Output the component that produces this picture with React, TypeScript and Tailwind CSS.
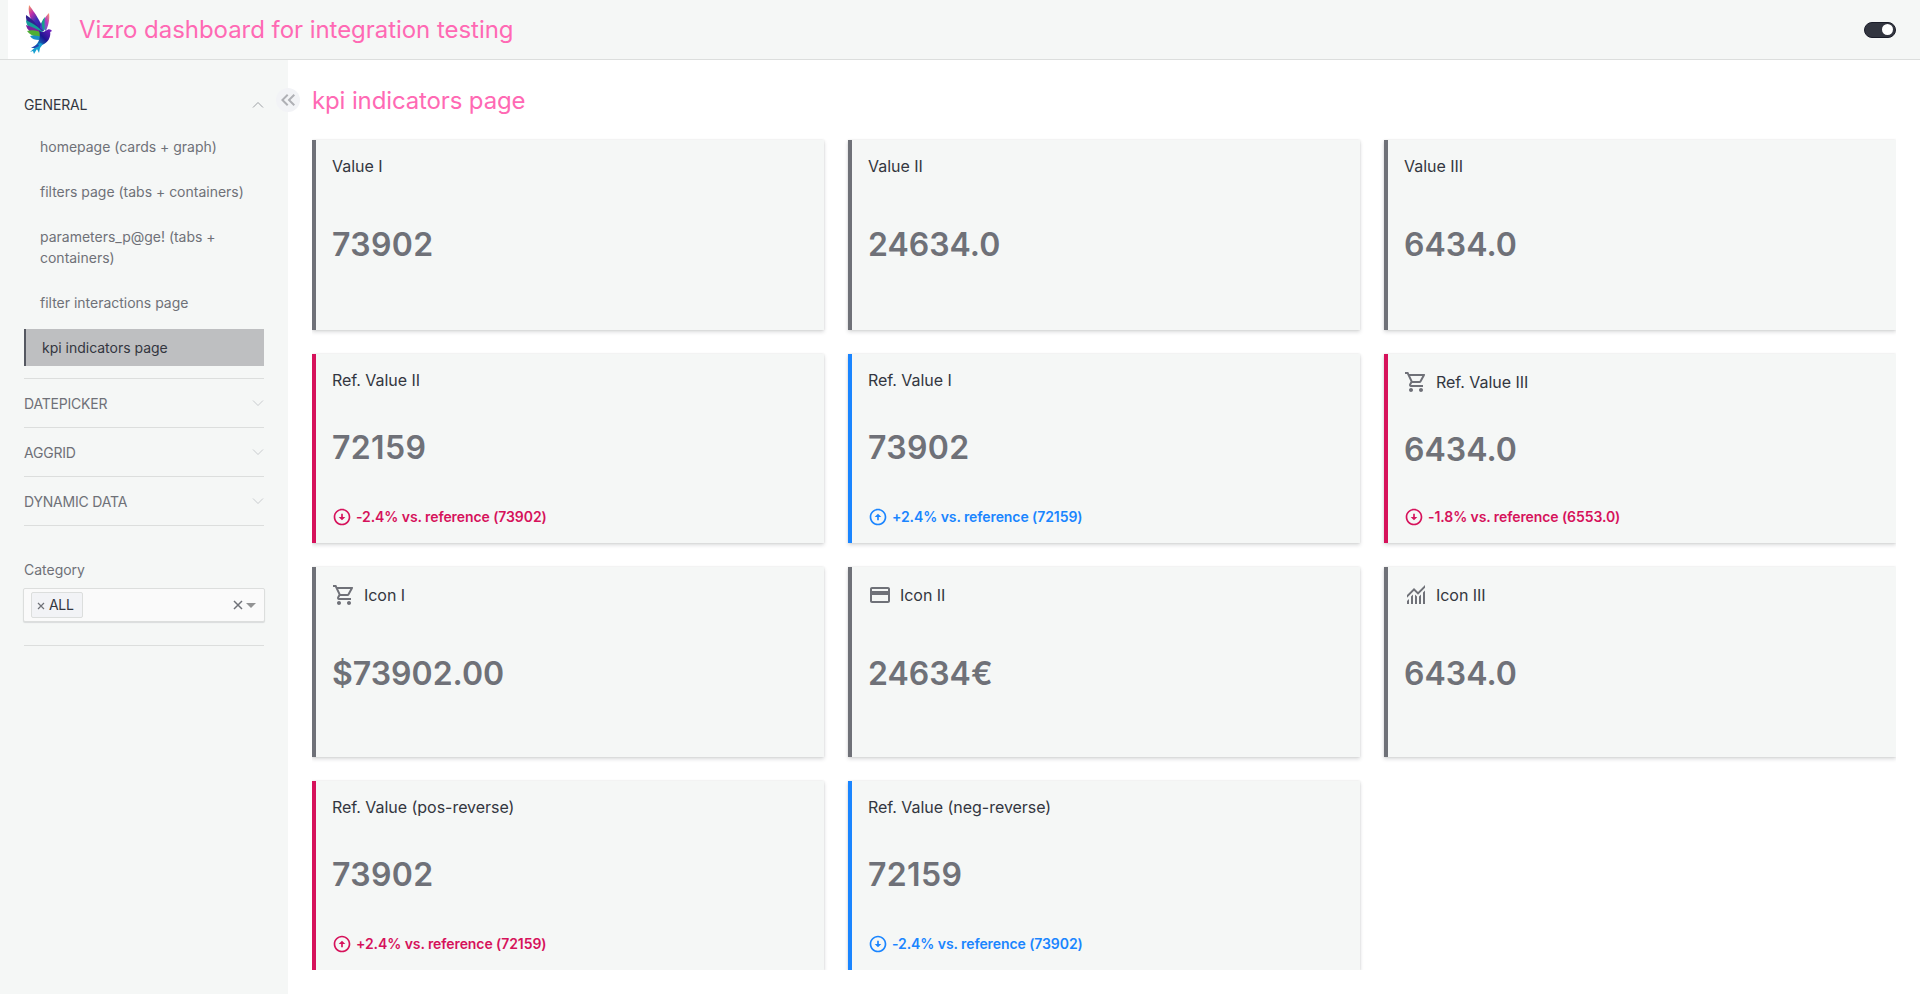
import React from "react";
import { MdOutlineShoppingCart, MdCreditCard, MdKeyboardDoubleArrowLeft, MdOutlineArrowCircleDown, MdOutlineArrowCircleUp } from "react-icons/md";

type Tone = "neutral" | "bad" | "good";
type Kpi = {
  title: string;
  value: string;
  tone: Tone;
  icon?: "cart" | "card" | "chart";
  delta?: string;
  dir?: "up" | "down";
};

const kpis: Kpi[] = [
  { title: "Value I", value: "73902", tone: "neutral" },
  { title: "Value II", value: "24634.0", tone: "neutral" },
  { title: "Value III", value: "6434.0", tone: "neutral" },
  { title: "Ref. Value II", value: "72159", tone: "bad", dir: "down", delta: "-2.4% vs. reference (73902)" },
  { title: "Ref. Value I", value: "73902", tone: "good", dir: "up", delta: "+2.4% vs. reference (72159)" },
  { title: "Ref. Value III", value: "6434.0", tone: "bad", dir: "down", icon: "cart", delta: "-1.8% vs. reference (6553.0)" },
  { title: "Icon I", value: "$73902.00", tone: "neutral", icon: "cart" },
  { title: "Icon II", value: "24634€", tone: "neutral", icon: "card" },
  { title: "Icon III", value: "6434.0", tone: "neutral", icon: "chart" },
  { title: "Ref. Value (pos-reverse)", value: "73902", tone: "bad", dir: "up", delta: "+2.4% vs. reference (72159)" },
  { title: "Ref. Value (neg-reverse)", value: "72159", tone: "good", dir: "down", delta: "-2.4% vs. reference (73902)" },
];

const borders: Record<Tone, string> = {
  neutral: "border-[#6f7178]",
  bad: "border-[#d6125b]",
  good: "border-[#1a85ff]",
};
const texts: Record<Tone, string> = {
  neutral: "text-[#6f7178]",
  bad: "text-[#d6125b]",
  good: "text-[#1a85ff]",
};

function FinanceIcon() {
  return (
    <svg viewBox="0 0 24 24" className="size-6" fill="currentColor">
      <path d="M3 21v-3l2-2v5zM7 21v-7.5l2-2V21zM11 21v-9.5l2 2V21zM15 21v-7.5l2-2V21zM19 21V9.500l2-2V21z" />
      <path d="M3 14.800V12l7-7 4 4 7-7v2.800l-7 7-4-4z" />
    </svg>
  );
}

function KpiIcon({ name }: { name: "cart" | "card" | "chart" }) {
  if (name === "cart") return <MdOutlineShoppingCart className="size-6" />;
  if (name === "card") return <MdCreditCard className="size-6" />;
  return <FinanceIcon />;
}

function KpiCard({ kpi }: { kpi: Kpi }) {
  const wholeNumber = /^\d+$/.test(kpi.value);
  return (
    <div className={`flex min-h-0 flex-col justify-between border-l-4 bg-[#f5f7f6] p-4 shadow-[0_2px_4px_0_rgba(20,23,33,0.16),0_0_2px_0_rgba(20,23,33,0.1)] ${borders[kpi.tone]}`}>
      <div className="flex items-center gap-2 text-[#6f7178]">
        {kpi.icon && <KpiIcon name={kpi.icon} />}
        <h4 className="text-base leading-5 tracking-[-0.032px] text-[#333640]">{kpi.title}</h4>
      </div>
      <p className={`text-[32px] leading-8 font-semibold text-[#6f7178] ${wholeNumber ? "tracking-[0.35px]" : "tracking-normal"}`}>{kpi.value}</p>
      <div className={`flex items-center gap-1 text-sm leading-5 font-semibold tracking-[-0.084px] ${texts[kpi.tone]}`}>
        {kpi.dir === "up" && <MdOutlineArrowCircleUp className="size-5" />}
        {kpi.dir === "down" && <MdOutlineArrowCircleDown className="size-5" />}
        {kpi.delta && <span>{kpi.delta}</span>}
      </div>
    </div>
  );
}

function BirdLogo() {
  return (
    <svg viewBox="0 0 62 59" className="h-[59px] w-[62px]">
      <defs>
        <linearGradient id="wingA" x1="0" y1="0" x2="0.7" y2="1">
          <stop offset="0" stopColor="#f9a25c" />
          <stop offset="0.3" stopColor="#c32fa8" />
          <stop offset="0.6" stopColor="#3b2fb5" />
          <stop offset="1" stopColor="#3a0fa0" />
        </linearGradient>
        <linearGradient id="wingB" x1="1" y1="0" x2="0" y2="1">
          <stop offset="0" stopColor="#ff9a6a" />
          <stop offset="0.45" stopColor="#b03ac4" />
          <stop offset="1" stopColor="#1795c4" />
        </linearGradient>
        <linearGradient id="body" x1="1" y1="0" x2="0" y2="1">
          <stop offset="0" stopColor="#7a1fc0" />
          <stop offset="0.5" stopColor="#1d1591" />
          <stop offset="1" stopColor="#0aa5cf" />
        </linearGradient>
      </defs>
      <path d="M21 5C27 13 33 22 36 31L32 32C26 26 19 16 21 5Z" fill="url(#wingA)" />
      <path d="M18 15C23 18 29 24 33 31L29 31C23 27 17 22 18 15Z" fill="#31218f" />
      <path d="M18 20C24 23 31 27 35 32L30 33C23 30 18 26 18 20Z" fill="#159c9a" />
      <path d="M18 25C24 27 30 29 34 33L29 35C23 33 19 30 18 25Z" fill="#7b239e" />
      <path d="M19 31C25 29 31 31 36 34L32 37C26 37 21 34 19 31Z" fill="#4faf35" />
      <path d="M22 36C27 35 32 36 36 38L31 40C27 40 24 39 22 36Z" fill="#1b8fc8" />
      <path d="M41 13C42 20 40 26 38 31L34 28C34 22 37 17 41 13Z" fill="url(#wingB)" />
      <path d="M37 17C36 23 37 27 36 31L33 28C33 23 34 20 37 17Z" fill="#14a08d" />
      <path d="M34 22C33 25 35 28 35 31L32 28C32 25 33 23 34 22Z" fill="#4740c8" />
      <path d="M31 30C35 34 37 31 40 29.500C42 29 43 30 44 31L42.200 32C43 37 40 43 34 45L27 46C31 42 33 38 31 30Z" fill="url(#body)" />
      <path d="M32 43L22 52L25 51L26 54L29 49L31 53L32 48L35 44Z" fill="#159fd0" />
      <path d="M30 44L23 48L27 48L31 46Z" fill="#2443ae" />
    </svg>
  );
}

function Chevron({ up = false }: { up?: boolean }) {
  return (
    <svg viewBox="0 0 12 8" className={`h-2 w-3 ${up ? "text-[#92949a]" : "text-[#c3c5c9]"}`} fill="none" stroke="currentColor" strokeWidth="0.9">
      <path d={up ? "M1 6.500 6 1.500 11 6.500" : "M1 1.500 6 6.500 11 1.500"} />
    </svg>
  );
}

const pages = [
  "homepage (cards + graph)",
  "filters page (tabs + containers)",
  "parameters_p@ge! (tabs + containers)",
  "filter interactions page",
];

function Sidebar() {
  return (
    <aside className="flex w-72 shrink-0 flex-col bg-[#f5f7f6] px-6 pt-6 text-sm tracking-[-0.01px] text-[#6f7178]">
      <div className="border-b border-[#dcdedd] pb-3">
        <div className="mb-0.5 flex h-[42px] items-center justify-between text-[#333640]">
          <span className="tracking-[-0.16px]">GENERAL</span>
          <Chevron up />
        </div>
        <nav className="flex flex-col gap-2">
          {pages.map((p) => (
            <a key={p} className="px-4 py-2 leading-[21px]">{p}</a>
          ))}
          <a className="border-l-2 border-[#555861] bg-[#bebfc1] px-4 py-2 leading-[21px] text-[#333640]">kpi indicators page</a>
        </nav>
      </div>
      {["DATEPICKER", "AGGRID", "DYNAMIC DATA"].map((s) => (
        <div key={s} className="flex h-[49px] items-center justify-between border-b border-[#dcdedd]">
          <span className="pt-0.5 tracking-[-0.2px]">{s}</span>
          <Chevron />
        </div>
      ))}
      <div className="mt-[34px] border-b border-[#dcdedd] pb-[23px]">
        <div className="leading-5">Category</div>
        <div className="-mx-px mt-2 flex h-[34px] items-center rounded-[2px] border border-[#dcdedd] bg-[#fafafa] pr-2 pl-[7px] shadow-[0_1px_1px_rgba(20,23,33,0.12)]">
          <div className="flex h-[26px] items-center gap-1 rounded-[2px] border border-[#dcdedd] bg-[#f2f3f6] pr-2 pl-[5px] text-[#333640]">
            <svg viewBox="0 0 8 8" className="mt-0.5 size-2 text-[#6f7178]" stroke="currentColor" strokeWidth="1.200">
              <path d="M1 1 7 7M7 1 1 7" />
            </svg>
            <span className="tracking-[-0.3px]">ALL</span>
          </div>
          <svg viewBox="0 0 10 10" className="ml-auto size-[10px] text-[#6f7178]" stroke="currentColor" strokeWidth="1.500">
            <path d="M1 1 9 9M9 1 1 9" />
          </svg>
          <svg viewBox="0 0 10 5" className="ml-[3px] h-[5px] w-[10px]" fill="#929394">
            <path d="M0 0H10L5 5Z" />
          </svg>
        </div>
      </div>
    </aside>
  );
}

export default function App() {
  return (
    <div className="flex h-[994px] w-[1920px] flex-col overflow-hidden bg-white font-['Inter',sans-serif]">
      <header className="flex h-[60px] shrink-0 items-center border-b border-[#dcdedd] bg-[#f5f7f6] pr-6 pl-2">
        <div className="h-[59px] w-[62px] bg-white">
          <BirdLogo />
        </div>
        <h1 className="ml-[9px] text-2xl tracking-[-0.048px] text-[#ff69b4]">Vizro dashboard for integration testing</h1>
        <div className="ml-auto flex h-4 w-8 items-center justify-end rounded-full border border-[#1b1d29] bg-[#333640] px-0.5">
          <div className="size-[11px] rounded-full bg-white" />
        </div>
      </header>
      <div className="relative flex min-h-0 flex-1">
        <Sidebar />
        <button className="absolute top-7 left-[276px] flex size-6 items-center justify-center rounded-full bg-[#f2f3f6] text-[#afb0b5]">
          <MdKeyboardDoubleArrowLeft className="size-6" />
        </button>
        <main className="flex min-w-0 flex-1 flex-col p-6">
          <h2 className="h-8 pt-px text-2xl leading-8 tracking-[-0.13px] text-[#ff69b4]">kpi indicators page</h2>
          <div className="flex min-h-0 flex-1 flex-col overflow-hidden pt-6">
            <div className="grid min-h-0 flex-1 grid-cols-3 grid-rows-4 gap-6">
              {kpis.map((k) => (
                <KpiCard key={k.title} kpi={k} />
              ))}
            </div>
          </div>
        </main>
      </div>
    </div>
  );
}
